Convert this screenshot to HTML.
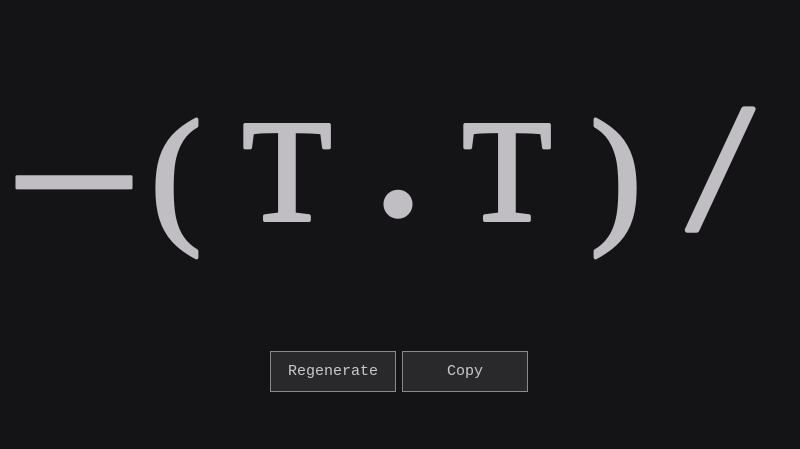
<!DOCTYPE html>
<html><head><style>
html,body{margin:0;padding:0;background:#141316;width:800px;height:449px;overflow:hidden}
svg{position:absolute;left:0;top:0}
.btn{position:absolute;top:351px;height:41px;background:#29282b;border:1px solid #8a898c;box-sizing:border-box;color:#c9c7cb;font:15px "Liberation Mono",monospace;display:flex;align-items:center;justify-content:center}
</style></head><body>
<svg width="800" height="449">
<g font-family="Liberation Serif, serif" fill="#c0bec3" stroke="#c0bec3" stroke-linejoin="round" text-anchor="middle">
<text x="74" y="234" font-size="222" stroke-width="3">–</text>
<text x="176" y="225" font-size="152" stroke-width="4">(</text>
<text x="287" y="220" font-size="145" stroke-width="4">T</text>
<text x="398" y="213" font-size="195" stroke-width="6">.</text>
<text x="507" y="220" font-size="145" stroke-width="4">T</text>
<text x="616" y="225" font-size="152" stroke-width="4">)</text>
<text x="0" y="0" font-size="180" stroke-width="6" transform="translate(713,228) skewX(-7)">/</text>
</g>
</svg>
<div class="btn" style="left:270px;width:126px">Regenerate</div>
<div class="btn" style="left:402px;width:126px">Copy</div>
</body></html>
